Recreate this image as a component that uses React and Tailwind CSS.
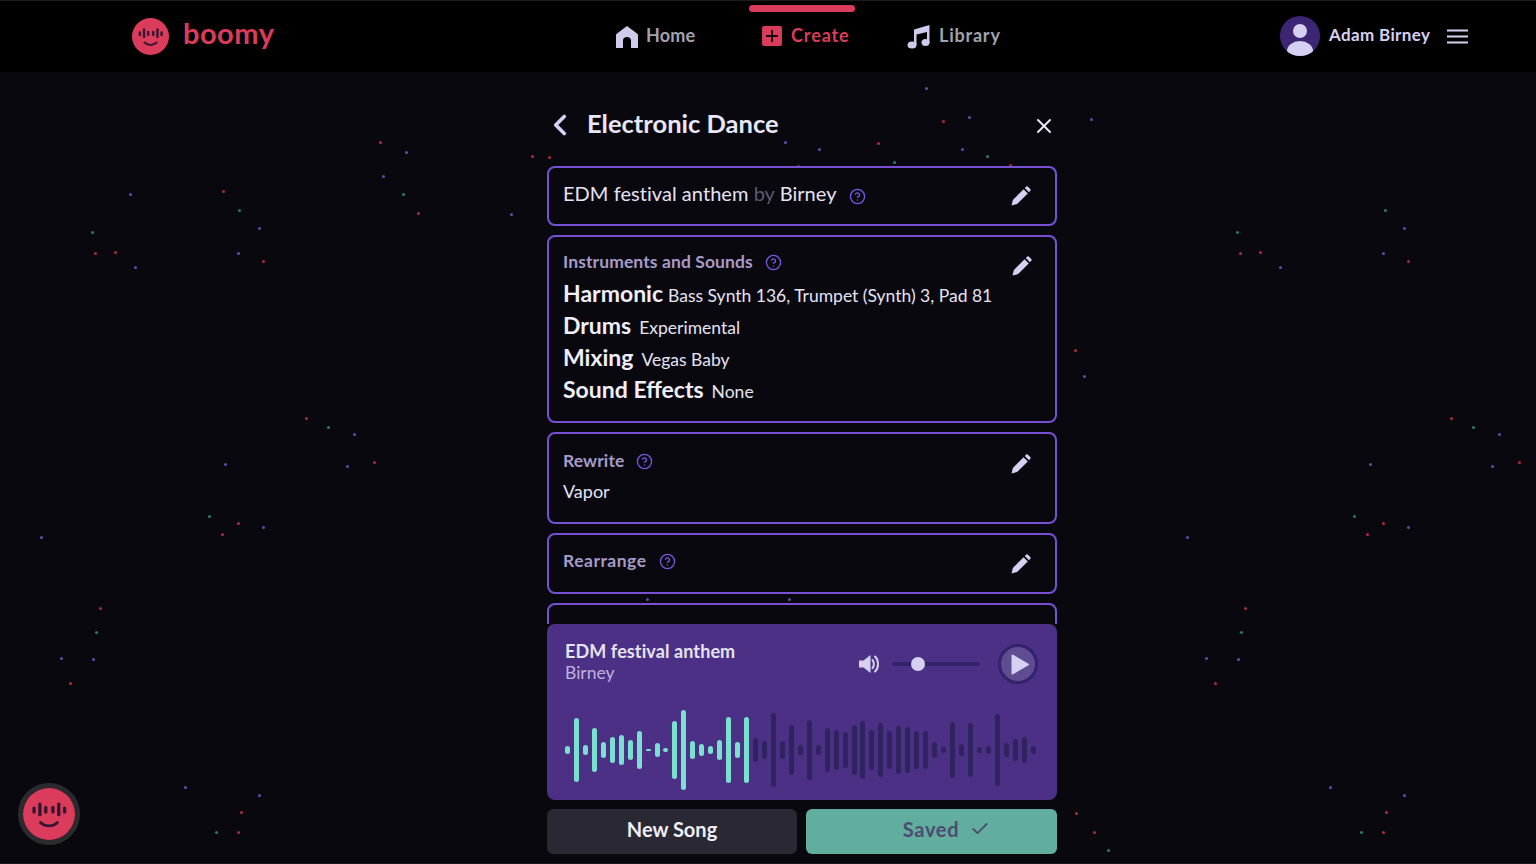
import React from "react";
import { ChevronLeft, X, Check, CircleHelp } from "lucide-react";

const P = "#7c5ad6", R = "#d8344f", G = "#2f9e7d";
const dots = [
  [926,87,P],[1091,118,P],[943,120,R],[969,116,P],[380,141,R],[406,151,P],[532,155,R],[549,156,R],[785,141,P],[819,148,P],[878,142,R],[962,148,P],[987,155,G],[894,161,G],[798,165,R],[1010,164,R],
  [130,193,P],[223,190,R],[239,209,G],[259,227,P],[92,231,G],[95,252,R],[115,251,R],[135,266,P],[238,252,P],[263,260,R],[383,175,P],[403,193,G],[418,212,R],[511,213,P],
  [306,417,R],[328,426,G],[354,433,P],[225,463,P],[347,465,P],[374,461,R],[209,515,G],[238,522,R],[263,526,P],[222,533,R],[41,536,P],[100,607,R],[96,631,G],[61,657,P],[93,658,P],[70,682,R],[185,786,P],[259,794,P],[241,811,R],[216,831,G],[238,831,R],
  [1385,209,G],[1404,227,P],[1237,231,G],[1240,252,R],[1260,251,R],[1280,266,P],[1383,252,P],[1408,260,R],[1075,349,R],[1084,375,P],[1451,417,R],[1473,426,G],[1499,433,P],[1370,463,P],[1492,465,P],[1519,461,R],[1354,515,G],[1383,522,R],[1408,526,P],[1367,533,R],[1187,536,P],[1245,607,R],[1241,631,G],[1206,657,P],[1238,658,P],[1215,682,R],[1330,786,P],[1404,794,P],[1386,811,R],[1361,831,G],[1383,831,R],[1076,812,R],[1094,831,R],[1108,849,G],[647,598,P],[789,598,P],
];
const bars = [22,190,32,130,46,76,90,60,112,6,42,12,176,240,56,36,26,58,196,48,200,72,52,220,56,148,30,178,32,132,118,106,148,174,120,160,112,142,136,116,112,46,16,170,36,164,16,26,216,40,66,80,24];

function Face({ size, eye = "#3a1530" }) {
  return (
    <svg width={size} height={size} viewBox="0 0 40 40">
      <circle cx="20" cy="20" r="20" fill="#dc3c5c" />
      <g stroke={eye} strokeWidth="2.600" strokeLinecap="round">
        <path d="M8.500 15.500v3M13 12.500v8M17.500 15v3.500M23 15v3.500M27.500 12.500v8M32 15.500v3" />
      </g>
      <path d="M13.500 26.500c3.500 3.500 9.500 3.500 13 0" stroke={eye} strokeWidth="2.200" fill="none" strokeLinecap="round" />
    </svg>
  );
}
function Pencil({ className = "" }) {
  return (
    <svg className={className} width="20" height="20" viewBox="0 0 20 20" fill="#d6d0f2">
      <path d="M0.500 19.500l1.400-5.600L12.600 3.200l4.200 4.200L6.100 18.100z" />
      <path d="M13.800 2l1.400-1.300c.5-.5 1.200-.5 1.700 0l2.400 2.400c.5.5.5 1.200 0 1.700L18 6.200z" />
    </svg>
  );
}
function Help({ className = "" }) {
  return <CircleHelp className={className} size={17} strokeWidth={1.9} color="#7c55e0" />;
}
function Card({ className = "", children }) {
  return <div className={"relative w-full shrink-0 rounded-lg border-[2.5px] border-[#7750d4] pl-[14px] pr-[15px] " + className}>{children}</div>;
}
function Row({ name, value, vClass = "ml-[8px]" }) {
  return (
    <div className="flex h-[32px] items-baseline">
      <span className="text-[23px] font-bold text-[#f1eefc]">{name}</span>
      <span className={"text-[17.500px] text-[#e6e3f4] " + vClass}>{value}</span>
    </div>
  );
}
function Label({ text, wide }) {
  return (
    <div className={"flex items-center gap-[12px] text-[17.500px] font-bold text-[#a79bc9] " + (wide ? "tracking-[0.5px]" : "tracking-[0.1px]")}>
      <span>{text}</span>
      <Help />
    </div>
  );
}

export default function App() {
  return (
    <div className="relative flex h-[864px] w-[1536px] flex-col overflow-hidden bg-[#08080e] font-['Lato',sans-serif] border-y border-[#1c1c1c]">
      {dots.map(([x, y, c], i) => (
        <span key={i} className="absolute h-[3px] w-[3px] rounded-full opacity-80" style={{ left: x - 1, top: y - 1, background: c }} />
      ))}

      <header className="relative flex h-[71px] w-full shrink-0 items-center bg-black">
        <div className="ml-[132px] flex w-[484px] items-center">
          <Face size={37} />
          <span className="ml-[14px] -mt-[7px] text-[29px] font-bold tracking-[0.5px] text-[#dc3c5c]">boomy</span>
        </div>
        <div className="flex w-[146px] items-center gap-[8px]">
          <svg width="22" height="24" viewBox="0 0 22 24" fill="#cfcbea"><path d="M11 1L21 8.500c.6.5 1 1 1 2V23h-7v-7.500c0-2-1.500-3.500-4-3.500s-4 1.500-4 3.500V23H0V10.500c0-1 .4-1.500 1-2z" /></svg>
          <span className="-mt-[2px] text-[18px] font-bold tracking-[0.2px] text-[#a3a3ad]">Home</span>
        </div>
        <div className="relative flex w-[145px] items-center gap-[9px]">
          <span className="-mt-[2px] flex h-[20px] w-[20px] items-center justify-center rounded-[2px] bg-[#dc3c5c]">
            <svg width="12" height="12" viewBox="0 0 12 12" stroke="#1a0a10" strokeWidth="2"><path d="M6 0v12M0 6h12" /></svg>
          </span>
          <span className="-mt-[2px] text-[18px] font-bold tracking-[0.9px] text-[#dc3c5c]">Create</span>
          <span className="absolute -left-[13px] -top-[19px] h-[7px] w-[106px] rounded-full bg-[#dc3c5c]" />
        </div>
        <div className="flex items-center gap-[9px]">
          <svg width="23" height="25" viewBox="0 0 23 25" fill="#cfcbea"><path d="M7 5.500L22.500 1v18h-2.500V8L9.500 10.500V21H7z" /><ellipse cx="5" cy="21" rx="4.500" ry="3.500" /><ellipse cx="18.500" cy="18.500" rx="4" ry="3.500" /></svg>
          <span className="-mt-[2px] text-[18px] font-bold tracking-[0.8px] text-[#a3a3ad]">Library</span>
        </div>
        <div className="absolute left-[1280px] top-[15px] flex items-center">
          <svg width="40" height="40" viewBox="0 0 40 40">
            <clipPath id="c"><circle cx="20" cy="20" r="20" /></clipPath>
            <circle cx="20" cy="20" r="20" fill="#3c2673" />
            <g clipPath="url(#c)" fill="#d6d0f2"><circle cx="20" cy="15" r="7" /><ellipse cx="20" cy="35" rx="13" ry="10" /></g>
          </svg>
          <span className="ml-[9px] -mt-[3px] text-[17px] font-bold tracking-[0.35px] text-[#d6d0f2]">Adam Birney</span>
          <svg className="ml-[17px]" width="21" height="15" viewBox="0 0 21 15" fill="#d6d0f2"><rect width="21" height="2" y="0.500" /><rect width="21" height="2" y="6.500" /><rect width="21" height="2" y="12.500" /></svg>
        </div>
      </header>

      <main className="relative ml-[547px] flex min-h-0 w-[510px] flex-1 flex-col">
        <div className="flex h-[94px] shrink-0 items-start pt-[36px]">
          <ChevronLeft size={34} strokeWidth={2.600} color="#d6d0f2" className="-ml-[4px] mt-[0px]" />
          <h1 className="ml-[10px] -mt-[4px] text-[25.500px] font-bold text-[#e9e6f8]">Electronic Dance</h1>
          <X size={24} strokeWidth={2} color="#e9e6f8" className="ml-auto mr-[1px] mt-[6px]" />
        </div>

        <div className="flex h-[458px] shrink-0 flex-col gap-[9px] overflow-hidden">
          <Card className="flex h-[60px] items-center">
            <span className="pb-[6px] text-[20px] tracking-[0.05px] text-[#e6e3f4]">EDM festival anthem <span className="text-[#5d5a70]">by</span> Birney</span>
            <Help className="ml-[12px]" />
            <Pencil className="absolute right-[24px] top-[18px]" />
          </Card>
          <Card className="h-[188px] pt-[12px]">
            <Label text="Instruments and Sounds" />
            <div className="mt-[1px]">
              <Row name="Harmonic" value="Bass Synth 136, Trumpet (Synth) 3, Pad 81" vClass="ml-[5px]" />
              <Row name="Drums" value="Experimental" />
              <Row name="Mixing" value="Vegas Baby" />
              <Row name="Sound Effects" value="None" />
            </div>
            <Pencil className="absolute right-[23px] top-[19px]" />
          </Card>
          <Card className="h-[92px] pt-[14px]">
            <Label text="Rewrite" />
            <div className="mt-[4px] text-[18px] text-[#e6e3f4]">Vapor</div>
            <Pencil className="absolute right-[24px] top-[20px]" />
          </Card>
          <Card className="flex h-[61px] items-center pb-[4px]">
            <Label text="Rearrange" wide />
            <Pencil className="absolute right-[24px] top-[19px]" />
          </Card>
          <Card className="h-[60px]">
            <span />
          </Card>
        </div>

        <section className="h-[176px] shrink-0 rounded-lg bg-[#4b3085]">
          <div className="flex h-[84px] items-start px-[18px]">
            <div className="pt-[16px]">
              <div className="text-[18px] font-bold leading-[22px] tracking-[0.1px] text-[#e6e3f4]">EDM festival anthem</div>
              <div className="-mt-[1px] text-[17.500px] leading-[24px] text-[#bfb3e0]">Birney</div>
            </div>
            <div className="ml-auto mr-[1px] mt-[20px] flex items-center">
              <svg className="translate-x-[1px]" width="22" height="20" viewBox="0 0 22 20" fill="none">
                <path d="M0 6.500h4.500L11.500 1v18L4.500 13.500H0z" fill="#d6d0f2" />
                <path d="M13.500 6c1.800 2 1.800 6 0 8M16 2.500c4 3.500 4 11.500 0 15" stroke="#d6d0f2" strokeWidth="2" strokeLinecap="round" />
              </svg>
              <div className="relative ml-[12px] h-[4px] w-[88px] rounded-full bg-[#33236a]">
                <span className="absolute left-[19px] top-[-5px] h-[14px] w-[14px] rounded-full bg-[#d6d0f2]" />
              </div>
              <div className="ml-[18px] flex h-[40px] w-[40px] items-center justify-center rounded-full border-[3px] border-[#33236a] bg-[#604c92]">
                <svg width="18" height="21" viewBox="0 0 18 21" className="ml-[3px]"><path d="M1.500 1.500L17 10.500 1.500 19.500z" fill="#d6d0f2" stroke="#d6d0f2" strokeWidth="2" strokeLinejoin="round" /></svg>
              </div>
            </div>
          </div>
          <div className="flex h-[84px] items-center justify-between pl-[18px] pr-[21px]">
            {bars.map((h, i) => (
              <span key={i} className={i <= 20 ? "w-[5px] rounded-full bg-[#7ae0cf]" : "w-[5px] rounded-full bg-[#2f2460]"} style={{ height: h / 3 }} />
            ))}
          </div>
        </section>

        <div className="mt-[9px] flex h-[45px] shrink-0 gap-[9px]">
          <button className="flex w-[250px] items-center justify-center rounded-md bg-[#2a2933] pb-[6px] text-[20px] font-bold text-[#f1eefc]">New Song</button>
          <button className="flex flex-1 items-center justify-center gap-[11px] rounded-md bg-[#62ae9e] pb-[6px] pl-[30px] text-[20px] font-bold tracking-[0.7px] text-[#4c4c72]">
            Saved <Check size={20} strokeWidth={2.200} color="#4c4c72" />
          </button>
        </div>
      </main>

      <div className="absolute left-[18px] top-[782px] rounded-full border-[5px] border-[#2b2b2f]">
        <Face size={52} />
      </div>
    </div>
  );
}
